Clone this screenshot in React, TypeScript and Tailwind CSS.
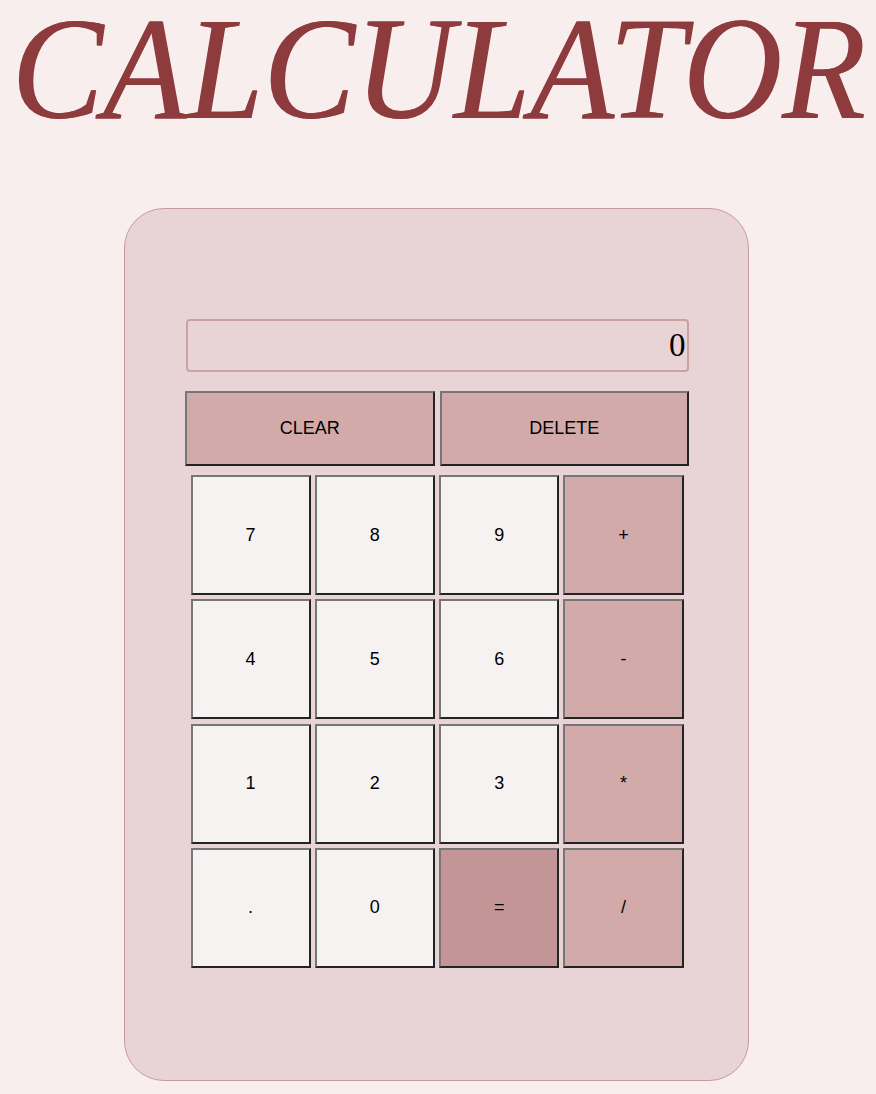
import React, { useState } from 'react'

const keys = [
  { label: '7', kind: 'num' }, { label: '8', kind: 'num' }, { label: '9', kind: 'num' }, { label: '+', kind: 'op' },
  { label: '4', kind: 'num' }, { label: '5', kind: 'num' }, { label: '6', kind: 'num' }, { label: '-', kind: 'op' },
  { label: '1', kind: 'num' }, { label: '2', kind: 'num' }, { label: '3', kind: 'num' }, { label: '*', kind: 'op' },
  { label: '.', kind: 'num' }, { label: '0', kind: 'num' }, { label: '=', kind: 'eq' }, { label: '/', kind: 'op' },
]

const bevel = 'border-2 border-t-[#767676] border-l-[#767676] border-r-[#232323] border-b-[#232323] text-black'

const App = () => {
  const [value, setValue] = useState('0')

  const press = (k: string) => {
    if (k === '=') {
      try {
        // eslint-disable-next-line no-new-func
        const r = Function(`return (${value})`)()
        setValue(String(r))
      } catch {
        setValue('0')
      }
      return
    }
    setValue(value === '0' && k !== '.' ? k : value + k)
  }

  return (
    <div className="min-h-[1094px] bg-[#f9eeee] flex flex-col items-center font-['Liberation_Sans',Arial,sans-serif]">
      <h1 className="h-[146px] mt-[-4px] mb-[66px] flex justify-center font-['Liberation_Serif','Times_New_Roman',serif] italic text-[#8e3b3d] text-[146px] leading-[146px] whitespace-nowrap">
        <span className="inline-block scale-x-[0.94] [text-shadow:1px_0_0_#8e3b3d]">CALCULATOR</span>
      </h1>

      <div className="w-[625px] mr-[3px] pl-[1px] rounded-[40px] border border-[#c99a9c] bg-[#e8d4d6] flex flex-col items-center pt-[110px] pb-[112px]">
        <div className="w-[503px] h-[53px] rounded-[4px] border-2 border-[#cba1a2] flex items-center justify-end pr-[1px] font-['Liberation_Serif','Times_New_Roman',serif] text-[33px] text-black">
          {value}
        </div>

        <div className="w-[504px] mt-[19px] grid grid-cols-2 gap-[5px]">
          <button className={`${bevel} h-[75px] bg-[#d3aaaa] text-[18px]`} onClick={() => setValue('0')}>CLEAR</button>
          <button className={`${bevel} h-[75px] bg-[#d3aaaa] text-[18px]`} onClick={() => setValue(value.length > 1 ? value.slice(0, -1) : '0')}>DELETE</button>
        </div>

        <div className="w-[493px] mt-[9px] grid grid-cols-4 gap-[4.33px]">
          {keys.map((k) => (
            <button
              key={k.label}
              onClick={() => press(k.label)}
              className={`${bevel} h-[120px] text-[18px] ${k.kind === 'num' ? 'bg-[#f7f2f2]' : k.kind === 'eq' ? 'bg-[#c49597]' : 'bg-[#d3aaaa]'}`}
            >
              {k.label}
            </button>
          ))}
        </div>
      </div>
    </div>
  )
}

export default App
